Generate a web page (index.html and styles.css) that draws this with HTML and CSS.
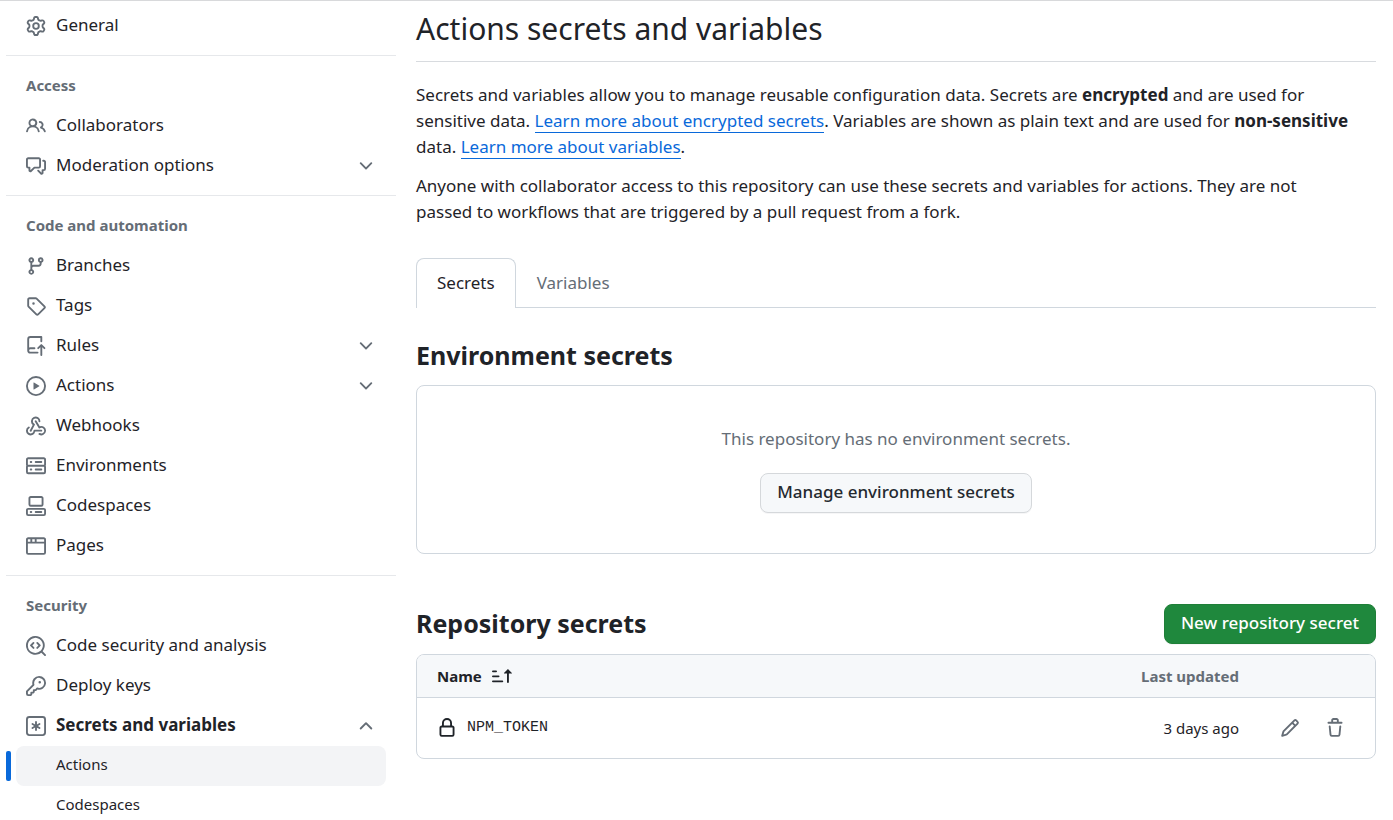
FILE: index.html
```html
<!DOCTYPE html>
<html lang="en">
<head>
<meta charset="utf-8">
<title>Actions secrets and variables</title>
<link rel="stylesheet" href="styles.css">
</head>
<body>
<div class="layout">
  <nav class="sidebar" aria-label="Repository settings">
    <ul class="nav-list">
      <li><a class="nav-item" href="#"><svg class="icon" viewBox="0 0 16 16"><path d="M8 0a8.2 8.2 0 0 1 .701.031C9.444.095 9.99.645 10.16 1.29l.288 1.107c.018.066.079.158.212.224.231.114.454.243.668.386.123.082.233.09.299.071l1.103-.303c.644-.176 1.392.021 1.82.63.27.385.506.792.704 1.218.315.675.111 1.422-.364 1.891l-.814.806c-.049.048-.098.147-.088.294.016.257.016.515 0 .772-.01.147.038.246.088.294l.814.806c.475.469.679 1.216.364 1.891a7.977 7.977 0 0 1-.704 1.217c-.428.61-1.176.807-1.82.63l-1.102-.302c-.067-.019-.177-.011-.3.071a5.909 5.909 0 0 1-.668.386c-.133.066-.194.158-.211.224l-.29 1.106c-.168.646-.715 1.196-1.458 1.26a8.006 8.006 0 0 1-1.402 0c-.743-.064-1.289-.614-1.458-1.26l-.289-1.106c-.018-.066-.079-.158-.212-.224a5.738 5.738 0 0 1-.668-.386c-.123-.082-.233-.09-.299-.071l-1.103.303c-.644.176-1.392-.021-1.82-.63a8.12 8.12 0 0 1-.704-1.218c-.315-.675-.111-1.422.363-1.891l.815-.806c.05-.048.098-.147.088-.294a6.214 6.214 0 0 1 0-.772c.01-.147-.038-.246-.088-.294l-.815-.806C.635 6.045.431 5.298.746 4.623a7.92 7.92 0 0 1 .704-1.217c.428-.61 1.176-.807 1.82-.63l1.102.302c.067.019.177.011.3-.071.214-.143.437-.272.668-.386.133-.066.194-.158.211-.224l.29-1.106C6.009.645 6.556.095 7.299.03 7.53.01 7.764 0 8 0Zm-.571 1.525c-.036.003-.108.036-.137.146l-.289 1.105c-.147.561-.549.967-.998 1.189-.173.086-.34.183-.5.29-.417.278-.97.423-1.529.27l-1.103-.303c-.109-.03-.175.016-.195.045-.22.312-.412.644-.573.99-.014.031-.021.11.059.19l.815.806c.411.406.562.957.53 1.456a4.709 4.709 0 0 0 0 .582c.032.499-.119 1.05-.53 1.456l-.815.806c-.081.08-.073.159-.059.19.162.346.353.677.573.989.02.03.085.076.195.046l1.102-.303c.56-.153 1.113-.008 1.53.27.161.107.328.204.501.29.447.222.85.629.997 1.189l.289 1.105c.029.109.101.143.137.146a6.6 6.6 0 0 0 1.142 0c.036-.003.108-.036.137-.146l.289-1.105c.147-.561.549-.967.998-1.189.173-.086.34-.183.5-.29.417-.278.97-.423 1.529-.27l1.103.303c.109.029.175-.016.195-.045.22-.313.411-.644.573-.99.014-.031.021-.11-.059-.19l-.815-.806c-.411-.406-.562-.957-.53-1.456a4.709 4.709 0 0 0 0-.582c-.032-.499.119-1.05.53-1.456l.815-.806c.081-.08.073-.159.059-.19a6.464 6.464 0 0 0-.573-.989c-.02-.03-.085-.076-.195-.046l-1.102.303c-.56.153-1.113.008-1.53-.27a4.44 4.44 0 0 0-.501-.29c-.447-.222-.85-.629-.997-1.189l-.289-1.105c-.029-.11-.101-.143-.137-.146a6.6 6.6 0 0 0-1.142 0ZM11 8a3 3 0 1 1-6 0 3 3 0 0 1 6 0ZM9.5 8a1.5 1.5 0 1 0-3.001.001A1.5 1.5 0 0 0 9.5 8Z"/></svg><span class="nav-label">General</span></a></li>
    </ul>
    <hr class="divider">
    <h2 class="nav-heading">Access</h2>
    <ul class="nav-list">
      <li><a class="nav-item" href="#"><svg class="icon" viewBox="0 0 16 16"><path d="M2 5.5a3.5 3.5 0 1 1 5.898 2.549 5.508 5.508 0 0 1 3.034 4.084.75.75 0 1 1-1.482.235 4 4 0 0 0-7.9 0 .75.75 0 0 1-1.482-.236A5.507 5.507 0 0 1 3.102 8.05 3.493 3.493 0 0 1 2 5.5ZM11 4a3.001 3.001 0 0 1 2.22 5.018 5.01 5.01 0 0 1 2.56 3.012.749.749 0 0 1-.885.954.752.752 0 0 1-.549-.514 3.507 3.507 0 0 0-2.522-2.372.75.75 0 0 1-.574-.73v-.352a.75.75 0 0 1 .416-.672A1.5 1.5 0 0 0 11 5.5.75.75 0 0 1 11 4Zm-5.5-.5a2 2 0 1 0-.001 3.999A2 2 0 0 0 5.5 3.5Z"/></svg><span class="nav-label">Collaborators</span></a></li>
      <li><button class="nav-item" type="button" aria-expanded="false"><svg class="icon" viewBox="0 0 16 16"><path d="M1.75 1h8.5c.966 0 1.75.784 1.75 1.75v5.5A1.75 1.75 0 0 1 10.25 10H7.061l-2.574 2.573A1.458 1.458 0 0 1 2 11.543V10h-.25A1.75 1.75 0 0 1 0 8.25v-5.5C0 1.784.784 1 1.75 1ZM1.5 2.75v5.5c0 .138.112.25.25.25h1a.75.75 0 0 1 .75.75v2.19l2.72-2.72a.749.749 0 0 1 .53-.22h3.5a.25.25 0 0 0 .25-.25v-5.5a.25.25 0 0 0-.25-.25h-8.5a.25.25 0 0 0-.25.25Zm13 2a.25.25 0 0 0-.25-.25h-.5a.75.75 0 0 1 0-1.5h.5c.966 0 1.75.784 1.75 1.75v5.5A1.75 1.75 0 0 1 14.25 12H14v1.543a1.458 1.458 0 0 1-2.487 1.03L9.22 12.28a.749.749 0 0 1 .326-1.275.749.749 0 0 1 .734.215l2.22 2.22v-2.19a.75.75 0 0 1 .75-.75h1a.25.25 0 0 0 .25-.25Z"/></svg><span class="nav-label">Moderation options</span><svg class="icon" viewBox="0 0 16 16"><path d="M12.78 5.22a.749.749 0 0 1 0 1.06l-4.25 4.25a.749.749 0 0 1-1.06 0L3.22 6.28a.749.749 0 1 1 1.06-1.06L8 8.939l3.72-3.719a.749.749 0 0 1 1.06 0Z"/></svg></button></li>
    </ul>
    <hr class="divider">
    <h2 class="nav-heading">Code and automation</h2>
    <ul class="nav-list">
      <li><a class="nav-item" href="#"><svg class="icon" viewBox="0 0 16 16"><path d="M9.5 3.25a2.25 2.25 0 1 1 3 2.122V6A2.5 2.5 0 0 1 10 8.5H6a1 1 0 0 0-1 1v1.128a2.251 2.251 0 1 1-1.5 0V5.372a2.25 2.25 0 1 1 1.5 0v1.836A2.493 2.493 0 0 1 6 7h4a1 1 0 0 0 1-1v-.628A2.25 2.25 0 0 1 9.5 3.25Zm-6 0a.75.75 0 1 0 1.5 0 .75.75 0 0 0-1.5 0Zm8.25-.75a.75.75 0 1 0 0 1.5.75.75 0 0 0 0-1.5ZM4.25 12a.75.75 0 1 0 0 1.5.75.75 0 0 0 0-1.5Z"/></svg><span class="nav-label">Branches</span></a></li>
      <li><a class="nav-item" href="#"><svg class="icon" viewBox="0 0 16 16"><path d="M1 7.775V2.75C1 1.784 1.784 1 2.75 1h5.025c.464 0 .91.184 1.238.513l6.25 6.25a1.75 1.75 0 0 1 0 2.474l-5.026 5.026a1.75 1.75 0 0 1-2.474 0l-6.25-6.25A1.752 1.752 0 0 1 1 7.775Zm1.5 0c0 .066.026.13.073.177l6.25 6.25a.25.25 0 0 0 .354 0l5.025-5.025a.25.25 0 0 0 0-.354l-6.25-6.25a.25.25 0 0 0-.177-.073H2.75a.25.25 0 0 0-.25.25ZM6 5a1 1 0 1 1 0 2 1 1 0 0 1 0-2Z"/></svg><span class="nav-label">Tags</span></a></li>
      <li><button class="nav-item" type="button" aria-expanded="false"><svg class="icon" viewBox="0 0 16 16"><path d="M1 2.5A2.5 2.5 0 0 1 3.5 0h8.75a.75.75 0 0 1 .75.75v3.5a.75.75 0 0 1-1.5 0V1.5h-8a1 1 0 0 0-1 1v6.708A2.493 2.493 0 0 1 3.5 9h3.25a.75.75 0 0 1 0 1.5H3.5a1 1 0 0 0 0 2h5.75a.75.75 0 0 1 0 1.5H3.5A2.5 2.5 0 0 1 1 11.5Zm13.23 7.79h-.001l-1.224-1.224v6.184a.75.75 0 0 1-1.5 0V9.066L10.28 10.29a.75.75 0 0 1-1.06-1.061l2.505-2.504a.75.75 0 0 1 1.06 0L15.29 9.23a.751.751 0 0 1-.018 1.042.751.751 0 0 1-1.042.018Z"/></svg><span class="nav-label">Rules</span><svg class="icon" viewBox="0 0 16 16"><path d="M12.78 5.22a.749.749 0 0 1 0 1.06l-4.25 4.25a.749.749 0 0 1-1.06 0L3.22 6.28a.749.749 0 1 1 1.06-1.06L8 8.939l3.72-3.719a.749.749 0 0 1 1.06 0Z"/></svg></button></li>
      <li><button class="nav-item" type="button" aria-expanded="false"><svg class="icon" viewBox="0 0 16 16"><path d="M8 0a8 8 0 1 1 0 16A8 8 0 0 1 8 0ZM1.5 8a6.5 6.5 0 1 0 13 0 6.5 6.5 0 0 0-13 0Zm4.879-2.773 4.264 2.559a.25.25 0 0 1 0 .428l-4.264 2.559A.25.25 0 0 1 6 10.559V5.442a.25.25 0 0 1 .379-.215Z"/></svg><span class="nav-label">Actions</span><svg class="icon" viewBox="0 0 16 16"><path d="M12.78 5.22a.749.749 0 0 1 0 1.06l-4.25 4.25a.749.749 0 0 1-1.06 0L3.22 6.28a.749.749 0 1 1 1.06-1.06L8 8.939l3.72-3.719a.749.749 0 0 1 1.06 0Z"/></svg></button></li>
      <li><a class="nav-item" href="#"><svg class="icon" viewBox="0 0 16 16"><path d="M5.5 4.25a2.25 2.25 0 0 1 4.5 0 .75.75 0 0 0 1.5 0 3.75 3.75 0 1 0-6.14 2.889l-2.272 4.258a.75.75 0 0 0 1.324.706L7 7.25a.75.75 0 0 0-.309-1.015A2.25 2.25 0 0 1 5.5 4.25Z"/><path d="M7.364 3.607a.75.75 0 0 1 1.03.257l2.608 4.349a3.75 3.75 0 1 1-.628 6.785.75.75 0 0 1 .752-1.299 2.25 2.25 0 1 0-.033-3.88.75.75 0 0 1-1.03-.256L7.107 4.636a.75.75 0 0 1 .257-1.03Z"/><path d="M2.9 8.776A.75.75 0 0 1 2.625 9.8 2.25 2.25 0 1 0 6 11.75a.75.75 0 0 1 .75-.751h5.5a.75.75 0 0 1 0 1.5H7.425a3.751 3.751 0 1 1-5.55-3.998.75.75 0 0 1 1.024.274Z"/></svg><span class="nav-label">Webhooks</span></a></li>
      <li><a class="nav-item" href="#"><svg class="icon" viewBox="0 0 16 16"><path d="M1.75 1h12.5c.966 0 1.75.784 1.75 1.75v4c0 .372-.116.717-.314 1 .198.283.314.628.314 1v4a1.75 1.75 0 0 1-1.75 1.75H1.75A1.75 1.75 0 0 1 0 12.75v-4c0-.358.109-.707.314-1a1.739 1.739 0 0 1-.314-1v-4C0 1.784.784 1 1.75 1ZM1.5 2.75v4c0 .138.112.25.25.25h12.5a.25.25 0 0 0 .25-.25v-4a.25.25 0 0 0-.25-.25H1.75a.25.25 0 0 0-.25.25Zm.25 5.75a.25.25 0 0 0-.25.25v4c0 .138.112.25.25.25h12.5a.25.25 0 0 0 .25-.25v-4a.25.25 0 0 0-.25-.25ZM7 4.75A.75.75 0 0 1 7.75 4h4.5a.75.75 0 0 1 0 1.5h-4.5A.75.75 0 0 1 7 4.75ZM7.75 10h4.5a.75.75 0 0 1 0 1.5h-4.5a.75.75 0 0 1 0-1.5ZM3 4.75A.75.75 0 0 1 3.75 4h.5a.75.75 0 0 1 0 1.5h-.5A.75.75 0 0 1 3 4.75ZM3.75 10h.5a.75.75 0 0 1 0 1.5h-.5a.75.75 0 0 1 0-1.5Z"/></svg><span class="nav-label">Environments</span></a></li>
      <li><a class="nav-item" href="#"><svg class="icon" viewBox="0 0 16 16"><path d="M0 11.25c0-.966.784-1.75 1.75-1.75h12.5c.966 0 1.75.784 1.75 1.75v3A1.75 1.75 0 0 1 14.25 16H1.75A1.75 1.75 0 0 1 0 14.25Zm2-9.5C2 .784 2.784 0 3.75 0h8.5C13.216 0 14 .784 14 1.75v5a1.75 1.75 0 0 1-1.75 1.75h-8.5A1.75 1.75 0 0 1 2 6.75Zm1.75-.25a.25.25 0 0 0-.25.25v5c0 .138.112.25.25.25h8.5a.25.25 0 0 0 .25-.25v-5a.25.25 0 0 0-.25-.25Zm-2 9.5a.25.25 0 0 0-.25.25v3c0 .138.112.25.25.25h12.5a.25.25 0 0 0 .25-.25v-3a.25.25 0 0 0-.25-.25Z"/><path d="M7 12.75a.75.75 0 0 1 .75-.75h4.5a.75.75 0 0 1 0 1.5h-4.5a.75.75 0 0 1-.75-.75Zm-4 0a.75.75 0 0 1 .75-.75h.5a.75.75 0 0 1 0 1.5h-.5a.75.75 0 0 1-.75-.75Z"/></svg><span class="nav-label">Codespaces</span></a></li>
      <li><a class="nav-item" href="#"><svg class="icon" viewBox="0 0 16 16"><path d="M0 2.75C0 1.784.784 1 1.75 1h12.5c.966 0 1.75.784 1.75 1.75v10.5A1.75 1.75 0 0 1 14.25 15H1.75A1.75 1.75 0 0 1 0 13.25ZM14.5 6h-13v7.25c0 .138.112.25.25.25h12.5a.25.25 0 0 0 .25-.25Zm-6-3.5v2h6V2.75a.25.25 0 0 0-.25-.25ZM5 2.5v2h2v-2Zm-3.25 0a.25.25 0 0 0-.25.25V4.5h2v-2Z"/></svg><span class="nav-label">Pages</span></a></li>
    </ul>
    <hr class="divider">
    <h2 class="nav-heading">Security</h2>
    <ul class="nav-list">
      <li><a class="nav-item" href="#"><svg class="icon" viewBox="0 0 16 16"><path d="M8.47 4.97a.75.75 0 0 0 0 1.06L9.94 7.5 8.47 8.97a.75.75 0 1 0 1.06 1.06l2-2a.75.75 0 0 0 0-1.06l-2-2a.75.75 0 0 0-1.06 0ZM6.53 6.03a.75.75 0 0 0-1.06-1.06l-2 2a.75.75 0 0 0 0 1.06l2 2a.75.75 0 1 0 1.06-1.06L5.06 7.5l1.47-1.47Z"/><path d="M12.246 13.307a7.501 7.501 0 1 1 1.06-1.06l2.474 2.473a.749.749 0 0 1-.326 1.275.749.749 0 0 1-.734-.215ZM1.5 7.5a6.002 6.002 0 0 0 3.608 5.504 6.002 6.002 0 0 0 6.486-1.117.748.748 0 0 1 .292-.293A6 6 0 1 0 1.5 7.5Z"/></svg><span class="nav-label">Code security and analysis</span></a></li>
      <li><a class="nav-item" href="#"><svg class="icon" viewBox="0 0 16 16"><path d="M10.5 0a5.499 5.499 0 1 1-1.288 10.848l-.932.932a.749.749 0 0 1-.53.22H7v.75a.749.749 0 0 1-.22.53l-.5.5a.749.749 0 0 1-.53.22H5v.75a.749.749 0 0 1-.22.53l-.5.5a.749.749 0 0 1-.53.22h-2A1.75 1.75 0 0 1 0 14.25v-2c0-.199.079-.389.22-.53l4.932-4.932A5.5 5.5 0 0 1 10.5 0Zm-4 5.5c-.001.431.069.86.205 1.269a.75.75 0 0 1-.181.768L1.5 12.56v1.69c0 .138.112.25.25.25h1.69l.06-.06v-1.19a.75.75 0 0 1 .75-.75h1.19l.06-.06v-1.19a.75.75 0 0 1 .75-.75h1.19l1.023-1.025a.75.75 0 0 1 .768-.18A4 4 0 1 0 6.5 5.5ZM11 6a1 1 0 1 1 0-2 1 1 0 0 1 0 2Z"/></svg><span class="nav-label">Deploy keys</span></a></li>
      <li>
        <button class="nav-item nav-item-open" type="button" aria-expanded="true"><svg class="icon" viewBox="0 0 16 16"><path d="M0 2.75A2.75 2.75 0 0 1 2.75 0h10.5A2.75 2.75 0 0 1 16 2.75v10.5A2.75 2.75 0 0 1 13.25 16H2.75A2.75 2.75 0 0 1 0 13.25ZM2.75 1.5c-.69 0-1.25.56-1.25 1.25v10.5c0 .69.56 1.25 1.25 1.25h10.5c.69 0 1.25-.56 1.25-1.25V2.75c0-.69-.56-1.25-1.25-1.25Z"/><path d="M8 4a.75.75 0 0 1 .75.75V6.7l1.69-.975a.75.75 0 0 1 .75 1.3L9.5 8l1.69.976a.75.75 0 0 1-.75 1.298L8.75 9.3v1.951a.75.75 0 0 1-1.5 0V9.299l-1.69.976a.75.75 0 0 1-.75-1.3L6.5 8l-1.69-.975a.75.75 0 0 1 .75-1.3l1.69.976V4.75A.75.75 0 0 1 8 4Z"/></svg><span class="nav-label">Secrets and variables</span><svg class="icon" viewBox="0 0 16 16"><path d="M3.22 10.53a.749.749 0 0 1 0-1.06l4.25-4.25a.749.749 0 0 1 1.06 0l4.25 4.25a.749.749 0 1 1-1.06 1.06L8 6.811 4.28 10.53a.749.749 0 0 1-1.06 0Z"/></svg></button>
        <ul class="nav-list">
          <li class="current"><a class="nav-item nav-sub nav-current" href="#" aria-current="page">Actions</a></li>
          <li><a class="nav-item nav-sub" href="#">Codespaces</a></li>
        </ul>
      </li>
    </ul>
  </nav>

  <main class="content">
    <h1 class="page-title">Actions secrets and variables</h1>
    <div class="intro">
      <p>Secrets and variables allow you to manage reusable configuration data. Secrets are <strong>encrypted</strong> and are used for sensitive data. <a class="link" href="#">Learn more about encrypted secrets</a>. Variables are shown as plain text and are used for <strong>non-sensitive</strong> data. <a class="link" href="#">Learn more about variables</a>.</p>
      <p>Anyone with collaborator access to this repository can use these secrets and variables for actions. They are not<br> passed to workflows that are triggered by a pull request from a fork.</p>
    </div>
    <nav class="tabs" aria-label="Secrets and variables">
      <a class="tab tab-selected" href="#" aria-current="page">Secrets</a>
      <a class="tab" href="#">Variables</a>
    </nav>

    <section class="environment">
      <h2 class="section-title">Environment secrets</h2>
      <div class="blank-slate">
        <p>This repository has no environment secrets.</p>
        <button class="btn" type="button">Manage environment secrets</button>
      </div>
    </section>

    <section>
      <div class="section-head">
        <h2 class="section-title">Repository secrets</h2>
        <button class="btn btn-primary" type="button">New repository secret</button>
      </div>
      <div class="table-box">
        <table class="secrets">
          <thead>
            <tr>
              <th scope="col"><button class="sort" type="button">Name<svg class="icon" viewBox="0 0 16 16"><path d="m12.927 2.573 3 3A.25.25 0 0 1 15.75 6H13.5v6.75a.75.75 0 0 1-1.5 0V6H9.75a.25.25 0 0 1-.177-.427l3-3a.25.25 0 0 1 .354 0ZM0 12.25a.75.75 0 0 1 .75-.75h7.5a.75.75 0 0 1 0 1.5H.75a.75.75 0 0 1-.75-.75Zm0-4a.75.75 0 0 1 .75-.75h4.5a.75.75 0 0 1 0 1.5H.75A.75.75 0 0 1 0 8.25Zm0-4a.75.75 0 0 1 .75-.75h2.5a.75.75 0 0 1 0 1.5H.75A.75.75 0 0 1 0 4.25Z"/></svg></button></th>
              <th class="updated" scope="col">Last updated</th>
              <td class="actions"></td>
            </tr>
          </thead>
          <tbody>
            <tr>
              <td><div class="secret-name"><svg class="icon" viewBox="0 0 16 16"><path d="M4 4a4 4 0 0 1 8 0v2h.25c.966 0 1.75.784 1.75 1.75v5.5A1.75 1.75 0 0 1 12.25 15h-8.5A1.75 1.75 0 0 1 2 13.25v-5.5C2 6.784 2.784 6 3.75 6H4Zm8.25 3.5h-8.5a.25.25 0 0 0-.25.25v5.5c0 .138.112.25.25.25h8.5a.25.25 0 0 0 .25-.25v-5.5a.25.25 0 0 0-.25-.25ZM10.5 6V4a2.5 2.5 0 1 0-5 0v2Z"/></svg><code>NPM_TOKEN</code></div></td>
              <td class="updated">3 days ago</td>
              <td class="actions">
                <div class="row-actions">
                  <button class="icon-btn" type="button" aria-label="Edit NPM_TOKEN"><svg class="icon" viewBox="0 0 16 16"><path d="M11.013 1.427a1.75 1.75 0 0 1 2.474 0l1.086 1.086a1.75 1.75 0 0 1 0 2.474l-8.61 8.61c-.21.21-.47.364-.756.445l-3.251.93a.75.75 0 0 1-.927-.928l.929-3.25c.081-.286.235-.547.445-.758l8.61-8.61Zm.176 4.823L9.75 4.81l-6.286 6.287a.253.253 0 0 0-.064.108l-.558 1.953 1.953-.558a.253.253 0 0 0 .108-.064Zm1.238-3.763a.25.25 0 0 0-.354 0L10.811 3.75l1.439 1.44 1.263-1.263a.25.25 0 0 0 0-.354Z"/></svg></button>
                  <button class="icon-btn" type="button" aria-label="Delete NPM_TOKEN"><svg class="icon" viewBox="0 0 16 16"><path d="M11 1.75V3h2.25a.75.75 0 0 1 0 1.5H2.75a.75.75 0 0 1 0-1.5H5V1.75C5 .784 5.784 0 6.75 0h2.5C10.216 0 11 .784 11 1.75ZM4.496 6.675l.66 6.6a.25.25 0 0 0 .249.225h5.19a.25.25 0 0 0 .249-.225l.66-6.6a.75.75 0 0 1 1.492.149l-.66 6.6A1.748 1.748 0 0 1 10.595 15h-5.19a1.75 1.75 0 0 1-1.741-1.575l-.66-6.6a.75.75 0 1 1 1.492-.15ZM6.5 1.75V3h3V1.75a.25.25 0 0 0-.25-.25h-2.5a.25.25 0 0 0-.25.25Z"/></svg></button>
                </div>
              </td>
            </tr>
          </tbody>
        </table>
      </div>
    </section>
  </main>
</div>
</body>
</html>
```
FILE: styles.css
```css
* {
  box-sizing: border-box;
}

body {
  margin: 0;
  border-top: 1px solid #d8d9db;
  background: #fff;
  color: #1f2328;
  font-family: "Noto Sans", sans-serif;
  font-size: 17px;
  line-height: 26px;
}

h1, h2, p, ul {
  margin: 0;
  padding: 0;
}

ul {
  list-style: none;
}

button {
  font: inherit;
  color: inherit;
  cursor: pointer;
}

.icon {
  flex: none;
  display: block;
  width: 20px;
  height: 20px;
  fill: #656d76;
}

.layout {
  display: grid;
  grid-template-columns: 390px minmax(0, 1fr);
  gap: 20px;
  padding: 0 17px 0 6px;
}

/* Sidebar */

.sidebar {
  height: calc(100vh - 1px);
  padding-top: 5px;
  overflow: hidden;
}

.divider {
  height: 1px;
  margin: 9px 0 10px;
  border: 0;
  background: #e6e8eb;
}

.nav-heading {
  padding: 6px 20px 8px;
  color: #656d76;
  font-size: 15px;
  font-weight: 700;
}

.nav-list {
  padding: 0 10px;
}

.nav-list .nav-list {
  padding: 0;
}

.nav-item {
  display: flex;
  align-items: center;
  gap: 10px;
  width: 100%;
  height: 40px;
  padding: 0 10px;
  border: 0;
  border-radius: 8px;
  background: none;
  color: #1f2328;
  text-align: left;
  text-decoration: none;
}

.nav-label {
  flex: 1;
  padding-bottom: 2px;
}

.nav-item-open {
  font-weight: 700;
}

.nav-sub {
  padding: 0 10px 4px 40px;
  font-size: 15px;
}

.nav-current {
  background: #f3f4f6;
}

.current {
  position: relative;
}

.current::before {
  content: "";
  position: absolute;
  top: 5px;
  left: -10px;
  width: 5px;
  height: 30px;
  border-radius: 2px;
  background: #0969da;
}

/* Main column */

.page-title {
  padding: 5px 0 10px;
  border-bottom: 1px solid #d8dbdf;
  font-size: 30px;
  font-weight: 400;
  line-height: 45px;
}

.intro {
  display: grid;
  gap: 13px;
  padding: 20px 0 33px;
}

.link {
  border-bottom: 1px solid #0969da;
  color: #0969da;
  text-decoration: none;
}

.tabs {
  display: flex;
  border-bottom: 1px solid #d0d7de;
}

.tab {
  height: 49px;
  padding: 11px 20px;
  border: 1px solid transparent;
  border-bottom: 0;
  color: #656d76;
  text-decoration: none;
}

.tab-selected {
  margin-bottom: -1px;
  height: 50px;
  border-color: #d0d7de;
  border-radius: 8px 8px 0 0;
  background: #fff;
  color: #1f2328;
}

.section-title {
  padding-bottom: 2px;
  font-size: 25px;
  font-weight: 700;
  line-height: 36px;
}

.environment {
  padding: 29px 0 50px;
}

.blank-slate {
  display: flex;
  flex-direction: column;
  align-items: center;
  gap: 21px;
  margin-top: 10px;
  padding: 40px;
  border: 1px solid #d0d7de;
  border-radius: 8px;
  color: #656d76;
}

.btn {
  height: 40px;
  padding: 0 16px 2px;
  border: 1px solid #d5d8db;
  border-radius: 8px;
  background: #f6f8fa;
  box-shadow: 0 1px 0 rgba(31, 35, 40, 0.04);
  color: #24292f;
  font-weight: 500;
}

.btn-primary {
  border-color: #1f7f38;
  background: #1f883d;
  color: #fff;
}

.section-head {
  display: flex;
  align-items: center;
  justify-content: space-between;
}

.table-box {
  margin-top: 10px;
  overflow: hidden;
  border: 1px solid #d0d7de;
  border-radius: 8px;
}

.secrets {
  width: 100%;
  border-collapse: collapse;
  font-size: 15px;
}

.secrets th,
.secrets td {
  padding: 0 20px;
  text-align: left;
}

.secrets thead tr {
  height: 42px;
  border-bottom: 1px solid #d0d7de;
  background: #f6f8fa;
}

.secrets tbody tr {
  height: 61px;
}

.secrets .updated {
  padding: 0;
  text-align: right;
}

.secrets th {
  color: #656d76;
  font-weight: 700;
}

.secrets .actions {
  width: 136px;
  padding: 0 20px 0 31px;
}

.sort {
  display: flex;
  align-items: center;
  gap: 10px;
  padding: 0;
  border: 0;
  background: none;
  color: #1f2328;
}

.sort .icon,
.secret-name .icon {
  fill: #1f2328;
}

.secret-name {
  display: flex;
  align-items: center;
  gap: 10px;
}

.secret-name code {
  font-family: "Liberation Mono", monospace;
  font-size: 15px;
}

.row-actions {
  display: flex;
  gap: 5px;
}

.icon-btn {
  display: grid;
  place-items: center;
  width: 40px;
  height: 40px;
  padding: 0;
  border: 0;
  background: none;
}
```
